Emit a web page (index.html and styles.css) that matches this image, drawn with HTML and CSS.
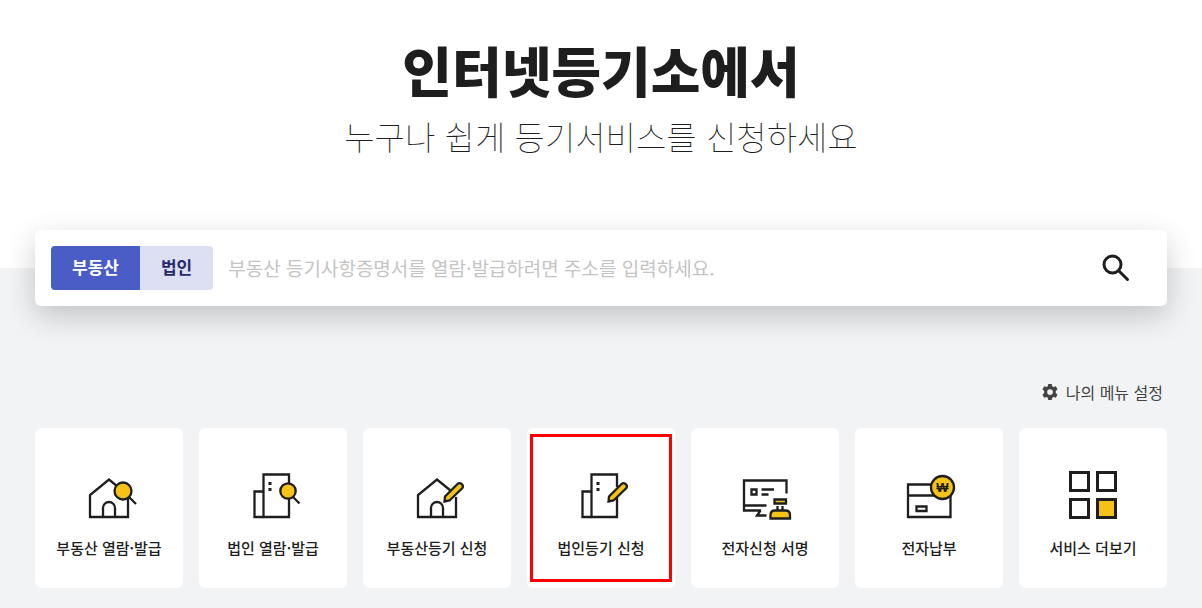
FILE: index.html
```
<!DOCTYPE html>
<html lang="ko">
<head>
  <meta charset="UTF-8" />
  <meta name="viewport" content="width=device-width, initial-scale=1" />
  <title>인터넷등기소</title>
  <link rel="stylesheet" href="styles.css">
</head>
<body>

  <header class="hero">
    <h1>인터넷등기소에서</h1>
    <p>누구나 쉽게 등기서비스를 신청하세요</p>
  </header>

  <main class="content">
    <form class="search" role="search">
      <div class="tabs">
        <button type="button" class="tab active">부동산</button>
        <button type="button" class="tab">법인</button>
      </div>
      <input type="text" class="search-input" aria-label="주소 검색" placeholder="부동산 등기사항증명서를 열람·발급하려면 주소를 입력하세요." />
      <button type="submit" class="search-btn" aria-label="검색">
        <svg width="32" height="32" viewBox="0 0 32 32">
          <circle cx="12.500" cy="12.500" r="8.500" />
          <path d="M19 19L27.500 27.500" />
        </svg>
      </button>
    </form>

    <div class="my-menu">
      <a href="#">
        <svg width="16" height="16" viewBox="0 0 18 18">
          <path fill-rule="evenodd" d="M7 0h4l.5 2.500 1.500.8 2.500-.8 2 3.500L15.500 8v2L17.500 12l-2 3.500-2.500-.8-1.500.8L11 18H7l-.5-2.500-1.500-.8-2.500.8-2-3.500L2.500 10V8L.5 6l2-3.500 2.500.8 1.500-.8zM9 5.800a3.200 3.200 0 1 0 0 6.400 3.200 3.200 0 0 0 0-6.400z" />
        </svg>
        나의 메뉴 설정
      </a>
    </div>

    <nav class="cards">
      <a href="#" class="card">
        <svg class="icon" viewBox="0 0 60 60">
          <path d="M11 52V30L30 14.500 49 30V52z" />
          <path d="M24 52V43a6 6 0 0 1 12 0V52" />
          <path d="M50 32l7 7" />
          <circle class="gold" cx="44" cy="26" r="8.500" />
        </svg>
        <span>부동산 열람·발급</span>
      </a>
      <a href="#" class="card">
        <svg class="icon" viewBox="0 0 60 60">
          <path d="M20.500 9.500H46V52H20.500z" />
          <path d="M20.500 26.500H11.500V52H20.500" />
          <path class="dots" d="M25.500 17h3v3h-3zM25.500 23h3v3h-3z" />
          <path d="M50 32l6.500 6.500" />
          <circle class="gold" cx="45" cy="26" r="7.700" />
        </svg>
        <span>법인 열람·발급</span>
      </a>
      <a href="#" class="card">
        <svg class="icon" viewBox="0 0 60 60">
          <path d="M43.500 25.500L30 14.500 11 30V52H49V32" />
          <path d="M24 52V43a6 6 0 0 1 12 0V52" />
          <path class="gold" d="M37.500 36.500L38 31.500 50.500 19q1.500-1.500 3.500-.5l1.500 1.500q1 2-.5 3.500L42.500 35.500z" />
        </svg>
        <span>부동산등기 신청</span>
      </a>
      <a href="#" class="card marked">
        <svg class="icon" viewBox="0 0 60 60">
          <path d="M46 22V9.500H20.500V52H46V32" />
          <path d="M20.500 26.500H11.500V52H20.500" />
          <path class="dots" d="M25.500 17h3v3h-3zM25.500 23h3v3h-3z" />
          <path class="gold" d="M37.500 36.500L38 31.500 50.500 19q1.500-1.500 3.500-.5l1.500 1.500q1 2-.5 3.500L42.500 35.500z" />
        </svg>
        <span>법인등기 신청</span>
      </a>
      <a href="#" class="card">
        <svg class="icon" viewBox="0 0 60 60">
          <path d="M51.500 28.500V15.500H9V45.500H26M9 40.500H31.500M25.500 45.500L22 50.500H31.500" />
          <path d="M16.500 24.500h5v5h-5zM26.500 24.500H39M26.500 29.500H33.500" />
          <path class="gold" d="M39.500 34.500H51V38.500H39.500z" />
          <path d="M42.500 41v5M47.500 41v5" />
          <path class="gold" d="M35.500 53.500V50q0-4.500 4.500-4.500H50.500q4.500 0 4.500 4.500V53.500z" />
        </svg>
        <span>전자신청 서명</span>
      </a>
      <a href="#" class="card">
        <svg class="icon" viewBox="0 0 60 60">
          <path d="M9 19.500H51.500V52H9zM9 30.500H51.500M17.500 41.500H27.500V46H17.500z" />
          <circle class="gold" cx="43.500" cy="22.500" r="11.500" />
          <text class="won" x="43.500" y="27">₩</text>
        </svg>
        <span>전자납부</span>
      </a>
      <a href="#" class="card">
        <svg class="icon grid-icon" viewBox="0 0 60 60">
          <path d="M7.500 7.500h18v18h-18zM34.500 7.500h18v18h-18zM7.500 34.500h18v18h-18z" />
          <path class="gold" d="M34.500 34.500h18v18h-18z" />
        </svg>
        <span>서비스 더보기</span>
      </a>
    </nav>
  </main>

</body>
</html>
```
FILE: styles.css
```
* {
  box-sizing: border-box;
}
body {
  margin: 0;
  min-height: 100vh;
  display: flex;
  flex-direction: column;
  background-color: #fff;
  color: #1e1e1e;
  font-family: "Noto Sans CJK KR", sans-serif;
}
button, input {
  font-family: inherit;
}
a {
  color: inherit;
  text-decoration: none;
}
.hero {
  padding: 30px 35px 106px;
  text-align: center;
}
.hero h1 {
  margin: 0;
  font-size: 54px;
  font-weight: 900;
  line-height: 80px;
}
.hero p {
  margin: 0;
  font-size: 33px;
  font-weight: 100;
  line-height: 52px;
}
.content {
  flex: 1;
  padding: 0 35px 20px;
  background-color: #f2f3f5;
}
.search {
  display: flex;
  align-items: center;
  height: 76px;
  margin-top: -38px;
  padding: 16px;
  background-color: #fff;
  border-radius: 6px;
  box-shadow: 0 10px 30px rgba(0, 0, 0, 0.2);
}
.tabs {
  display: flex;
  height: 44px;
  border-radius: 4px;
  overflow: hidden;
}
.tab {
  padding: 0 21px 3px;
  border: none;
  background-color: #dddff2;
  color: #27296c;
  font-size: 17px;
  font-weight: 700;
  cursor: pointer;
}
.tab.active {
  background-color: #4a5dc7;
  color: #fff;
}
.search-input {
  flex: 1;
  min-width: 0;
  height: 44px;
  padding: 0 15px 2px;
  border: none;
  outline: none;
  background: none;
  font-size: 19px;
}
.search-input::placeholder {
  color: #c4c4c4;
}
.search-btn {
  display: flex;
  margin-right: 19px;
  padding: 0;
  border: none;
  background: none;
  cursor: pointer;
}
.search-btn svg {
  fill: none;
  stroke: #1e1e1e;
  stroke-width: 3;
  stroke-linecap: round;
}
.my-menu {
  display: flex;
  justify-content: flex-end;
  margin-top: 74px;
  padding-right: 4px;
}
.my-menu a {
  display: flex;
  align-items: center;
  gap: 8px;
  color: #444;
  font-size: 16px;
  line-height: 24px;
}
.my-menu svg {
  fill: #444;
}
.cards {
  display: grid;
  grid-template-columns: repeat(7, 1fr);
  gap: 16px;
  margin-top: 24px;
}
.card {
  position: relative;
  display: flex;
  flex-direction: column;
  align-items: center;
  gap: 12px;
  padding: 37px 0 29px;
  background-color: #fff;
  border-radius: 6px;
  font-size: 15px;
  font-weight: 500;
  line-height: 22px;
  white-space: nowrap;
}
/* highlight box over the card */
.marked::after {
  content: "";
  position: absolute;
  inset: 6px 3px;
  border: 3px solid #f00;
}
.icon {
  width: 60px;
  height: 60px;
  fill: none;
  stroke: #1e1e1e;
  stroke-width: 2.3;
}
.icon .gold {
  fill: #f5c216;
}
.icon .dots {
  fill: #1e1e1e;
  stroke: none;
}
.icon .won {
  fill: #1e1e1e;
  stroke: none;
  font-family: "Liberation Sans", sans-serif;
  font-size: 13px;
  font-weight: 700;
  text-anchor: middle;
}
.icon.grid-icon {
  stroke-width: 3;
}
```
